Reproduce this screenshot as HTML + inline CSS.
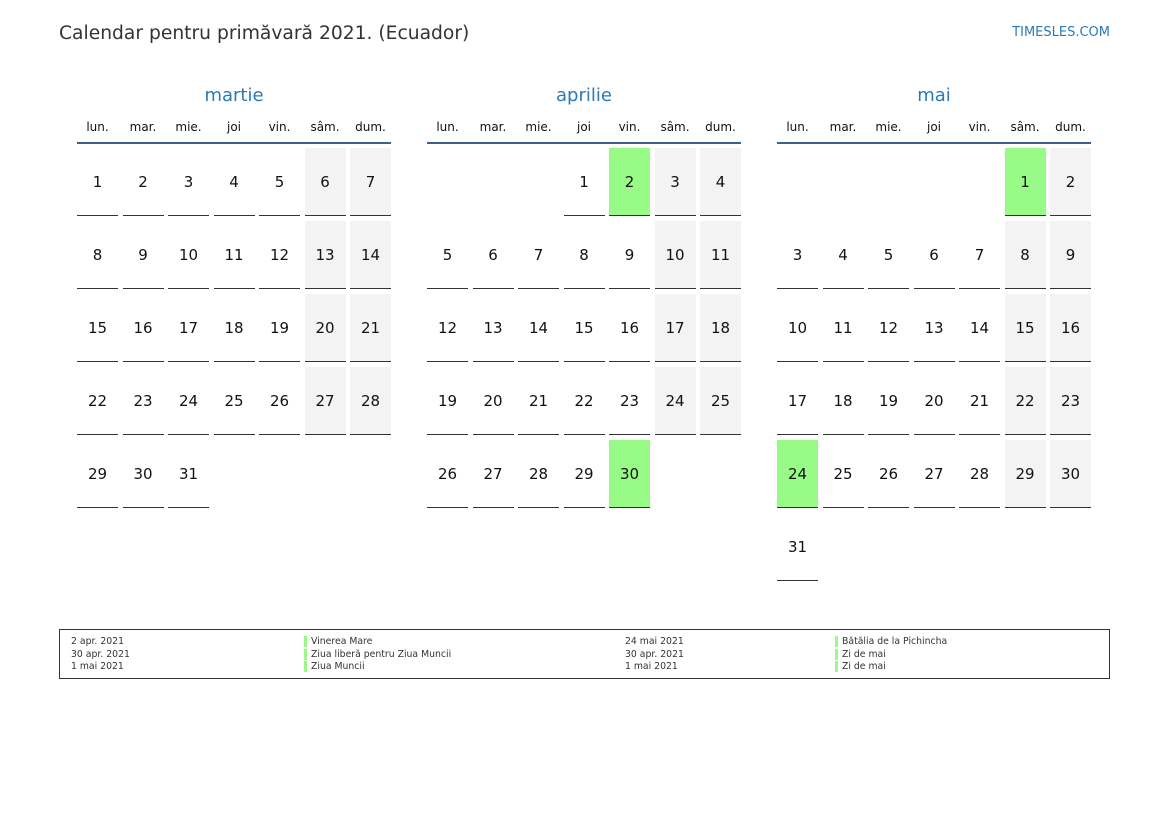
<!DOCTYPE html>
<html><head><meta charset="utf-8"><style>
body{margin:0;width:1169px;height:827px;background:#fff;font-family:"DejaVu Sans","Liberation Sans",sans-serif;color:#111;position:relative;overflow:hidden}
.t{position:absolute;left:59px;top:23px;font-size:18.7px;color:#333}
.logo{position:absolute;right:59px;top:25px;font-size:13px;color:#2a7ab8}
.m{position:absolute;top:84px;width:314px}
.mt{text-align:center;font-size:18px;color:#2a7ab8;height:24px;line-height:24px}
.hd{display:grid;grid-template-columns:repeat(7,41px);column-gap:4.5px;margin-top:8px;font-size:12px;text-align:center;height:26px;line-height:22px;border-bottom:2px solid #3d5f8a}
.g{display:grid;grid-template-columns:repeat(7,41px);column-gap:4.5px;row-gap:5px;margin-top:4px}
.g div{height:67px;line-height:69px;text-align:center;font-size:15px;border-bottom:1px solid #333}
.g .e{border-bottom:none}
.g .w{background:#f3f3f3}
.g .h{background:#98fb87}
.lg{position:absolute;left:59px;top:629px;width:1049px;height:48px;border:1px solid #333;font-size:9.3px;color:#333;line-height:12.5px}
.lg div{position:absolute;top:6px}
.lg .b{border-left:3px solid #98fb87;padding-left:4px}
</style></head><body>
<div class="t">Calendar pentru primăvară 2021. (Ecuador)</div>
<div class="logo">TIMESLES.COM</div>

<div class="m" style="left:77px"><div class="mt">martie</div>
<div class="hd"><span>lun.</span><span>mar.</span><span>mie.</span><span>joi</span><span>vin.</span><span>sâm.</span><span>dum.</span></div>
<div class="g">
<div>1</div><div>2</div><div>3</div><div>4</div><div>5</div><div class="w">6</div><div class="w">7</div>
<div>8</div><div>9</div><div>10</div><div>11</div><div>12</div><div class="w">13</div><div class="w">14</div>
<div>15</div><div>16</div><div>17</div><div>18</div><div>19</div><div class="w">20</div><div class="w">21</div>
<div>22</div><div>23</div><div>24</div><div>25</div><div>26</div><div class="w">27</div><div class="w">28</div>
<div>29</div><div>30</div><div>31</div>
</div></div>

<div class="m" style="left:427px"><div class="mt">aprilie</div>
<div class="hd"><span>lun.</span><span>mar.</span><span>mie.</span><span>joi</span><span>vin.</span><span>sâm.</span><span>dum.</span></div>
<div class="g">
<div class="e"></div><div class="e"></div><div class="e"></div><div>1</div><div class="h">2</div><div class="w">3</div><div class="w">4</div>
<div>5</div><div>6</div><div>7</div><div>8</div><div>9</div><div class="w">10</div><div class="w">11</div>
<div>12</div><div>13</div><div>14</div><div>15</div><div>16</div><div class="w">17</div><div class="w">18</div>
<div>19</div><div>20</div><div>21</div><div>22</div><div>23</div><div class="w">24</div><div class="w">25</div>
<div>26</div><div>27</div><div>28</div><div>29</div><div class="h">30</div>
</div></div>

<div class="m" style="left:777px"><div class="mt">mai</div>
<div class="hd"><span>lun.</span><span>mar.</span><span>mie.</span><span>joi</span><span>vin.</span><span>sâm.</span><span>dum.</span></div>
<div class="g">
<div class="e"></div><div class="e"></div><div class="e"></div><div class="e"></div><div class="e"></div><div class="h">1</div><div class="w">2</div>
<div>3</div><div>4</div><div>5</div><div>6</div><div>7</div><div class="w">8</div><div class="w">9</div>
<div>10</div><div>11</div><div>12</div><div>13</div><div>14</div><div class="w">15</div><div class="w">16</div>
<div>17</div><div>18</div><div>19</div><div>20</div><div>21</div><div class="w">22</div><div class="w">23</div>
<div class="h">24</div><div>25</div><div>26</div><div>27</div><div>28</div><div class="w">29</div><div class="w">30</div>
<div>31</div>
</div></div>

<div class="lg">
<div style="left:11px">2 apr. 2021<br>30 apr. 2021<br>1 mai 2021</div>
<div style="left:244px"><span class="b">Vinerea Mare</span><br><span class="b">Ziua liberă pentru Ziua Muncii</span><br><span class="b">Ziua Muncii</span></div>
<div style="left:565px">24 mai 2021<br>30 apr. 2021<br>1 mai 2021</div>
<div style="left:775px"><span class="b">Bătălia de la Pichincha</span><br><span class="b">Zi de mai</span><br><span class="b">Zi de mai</span></div>
</div>
</body></html>
